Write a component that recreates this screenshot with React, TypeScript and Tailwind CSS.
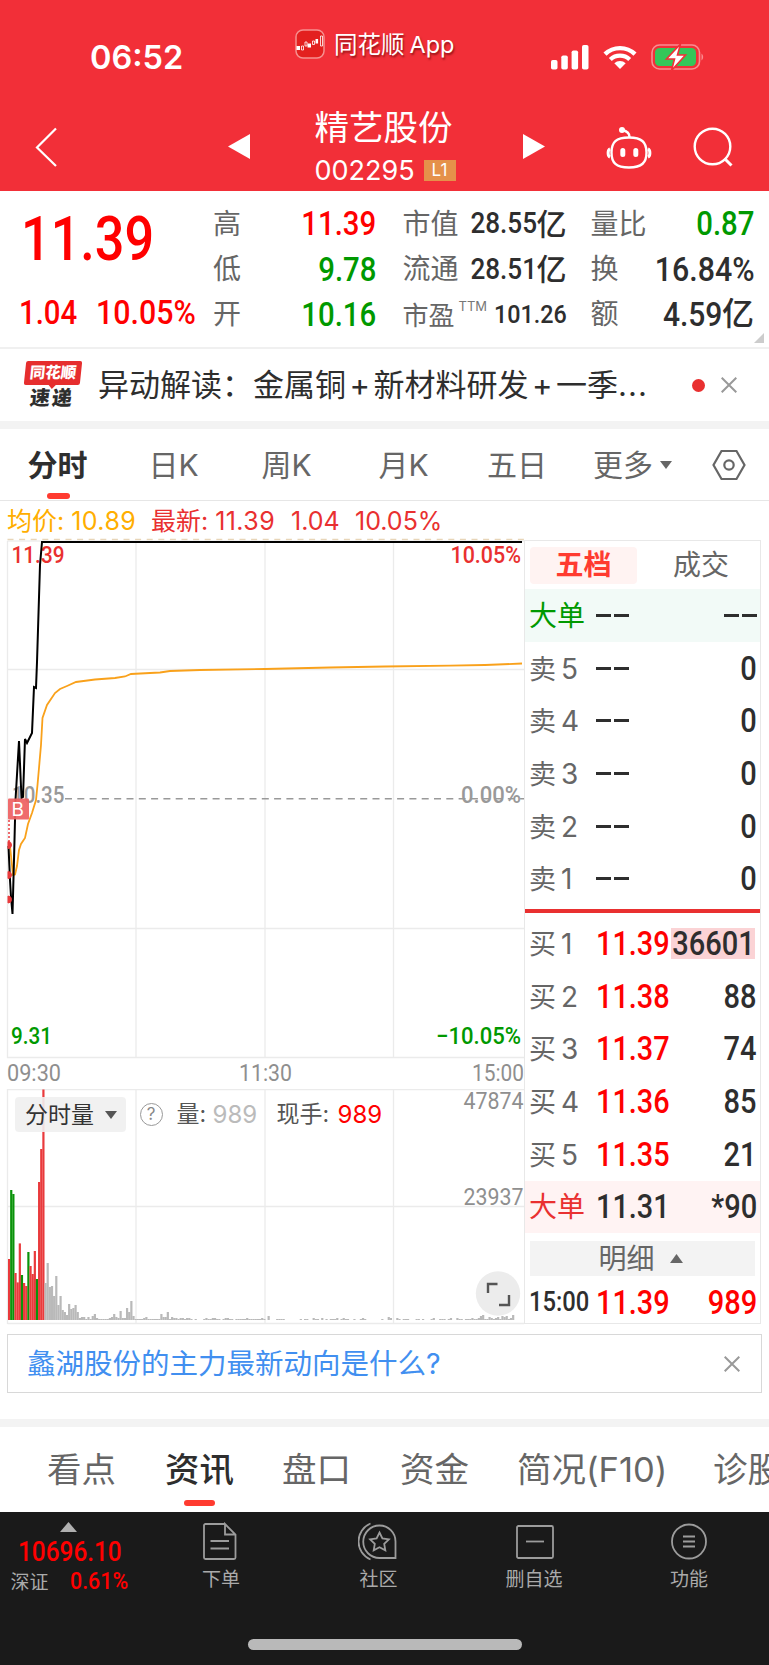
import type { ReactNode } from "react";

const CJK = "[font-family:Inter,'Noto_Sans_CJK_SC',sans-serif]";
const NUM = "[font-family:Roboto,'Noto_Sans_CJK_SC',sans-serif] font-medium whitespace-nowrap";

function StatusBar() {
  return (
    <div className="flex h-[102px] shrink-0 items-start text-white">
      <div className="ml-[90px] mt-[38px] w-[205px] text-[32.500px] font-semibold leading-[40px]">06:52</div>
      <svg className="mt-[29px] h-[30px] w-[30px]" viewBox="0 0 30 30" fill="none">
        <rect x="1" y="1" width="28" height="28" rx="7" fill="#e3201f" stroke="#f6908f" strokeWidth="1.500" />
        <path d="M1.500 17h3.500v4h-3.500zM12.500 14.500h3.500v4h-3.500zM20.500 10h2.600v4.500h-2.600z" fill="#fff" />
        <path d="M6.500 17h2v4h-2zM10 13h2v4h-2zM17.500 12h2v3.500h-2zM25.500 7h2v10h-2z" stroke="#fff" strokeWidth=".8" />
      </svg>
      <div className="ml-[9px] mt-[28px] w-[217px] whitespace-nowrap text-[23.500px] leading-[34px] [text-shadow:1px_2px_2px_rgba(90,0,0,.6)]">
        同花顺<span className="ml-[5px]">App</span>
      </div>
      <svg className="mt-[45px] h-[25px] w-[38px]" viewBox="0 0 38 25" fill="#fff">
        <rect x="0" y="15" width="6.500" height="9.500" rx="1.800" />
        <rect x="10.300" y="10.500" width="6.500" height="14" rx="1.800" />
        <rect x="20.600" y="5.500" width="6.500" height="19" rx="1.800" />
        <rect x="31" y="0" width="6.500" height="24.500" rx="1.800" />
      </svg>
      <svg className="ml-[14px] mt-[45px] h-[24px] w-[34px]" viewBox="0 0 34 24" fill="none" stroke="#fff">
        <path d="M2 9.200A21.500 21.500 0 0 1 32 9.200" strokeWidth="4.400" />
        <path d="M7.300 14.600A14 14 0 0 1 26.700 14.600" strokeWidth="4.200" />
        <path d="M17 24L11.300 18.200A8.300 8.300 0 0 1 22.700 18.200Z" fill="#fff" stroke="none" />
      </svg>
      <svg className="ml-[14px] mt-[43px] h-[28px] w-[54px]" viewBox="0 0 54 28">
        <rect x="1" y="2" width="47.500" height="24" rx="7.500" fill="none" stroke="#f98d91" strokeWidth="1.600" />
        <path d="M50.500 10.500a4.500 4.500 0 0 1 0 7z" fill="#f98d91" />
        <rect x="4" y="5" width="41" height="18" rx="4.500" fill="#34c759" />
        <path d="M29.500 1L15.500 16H23.500L20.500 27.500L34.500 12H26.500Z" fill="#fff" stroke="#f22f38" strokeWidth="1.600" />
      </svg>
    </div>
  );
}

function TitleBar() {
  return (
    <div className="flex h-[89px] shrink-0 items-start text-white">
      <svg className="ml-[34px] mt-[25px] h-[40px] w-[24px]" viewBox="0 0 24 40" fill="none" stroke="#fff" strokeWidth="2.200">
        <path d="M22 1.500L3 20.500L22 39" />
      </svg>
      <svg className="ml-[170px] mt-[32px] h-[25px] w-[22px]" viewBox="0 0 22 25" fill="#fff"><path d="M0 12.500L22 0V25Z" /></svg>
      <div className="ml-[64.500px] w-[208.500px]">
        <div className="mt-[3px] text-[34.500px] leading-[46px]">精艺股份</div>
        <div className="flex h-[40px] items-start">
          <span className="w-[109px] text-[27px] leading-[40px]">002295</span>
          <span className="mt-[9px] flex h-[21px] w-[32px] items-center justify-center bg-[#e5914a] text-[17px] leading-none">L1</span>
        </div>
      </div>
      <svg className="mt-[32px] h-[25px] w-[22px]" viewBox="0 0 22 25" fill="#fff"><path d="M22 12.500L0 0V25Z" /></svg>
      <svg className="ml-[60px] mt-[23px] h-[44px] w-[48px]" viewBox="0 0 48 44" fill="none" stroke="#fff" strokeWidth="2.400">
        <path d="M24 12.500c13 0 17.500 5 17.500 15S37 42.500 24 42.500S6.500 38 6.500 27.500S11 12.500 24 12.500Z" />
        <path d="M5 24c-2.500 1-2.500 7 0 8M43 24c2.500 1 2.500 7 0 8" strokeWidth="3" />
        <path d="M24.500 12c0-4-3-6-7-7" />
        <circle cx="17" cy="5" r="3" fill="#fff" stroke="none" />
        <path d="M17.800 25.500v4M30.800 25.500v4" strokeWidth="5" strokeLinecap="round" />
      </svg>
      <svg className="ml-[39px] mt-[24px] h-[42px] w-[42px]" viewBox="0 0 42 42" fill="none" stroke="#fff" strokeWidth="2.400">
        <circle cx="20.500" cy="20.500" r="17.800" />
        <path d="M32.500 32.500L39.500 39.500" strokeWidth="3" />
      </svg>
    </div>
  );
}

function Stat({ label, children }: { label: ReactNode; children: ReactNode }) {
  return (
    <div className="flex h-[45.400px] items-center justify-between leading-none">
      <span className="whitespace-nowrap text-[28px] text-[#666]">{label}</span>
      {children}
    </div>
  );
}

function Yi({ value, className, unit }: { value: string; className: string; unit: string }) {
  return (
    <span className="flex items-center text-[#2e2e2e]">
      <span className={className}>{value}</span>
      <span className={unit + " font-medium"}>亿</span>
    </span>
  );
}

function Quote() {
  const big = NUM + " inline-block origin-right scale-x-[.89] text-[33px]";
  const mid = NUM + " inline-block origin-right scale-x-[.9] text-[29px]";
  return (
    <div className="relative flex h-[158px] shrink-0 border-b-2 border-[#f0f0f0] pt-[10px]">
      <div className="w-[213px] text-[#f00]">
        <div className={NUM + " ml-[20.500px] h-[89px] origin-left scale-x-[.855] text-[61px] leading-[76px]"}>11.39</div>
        <div className={NUM + " ml-[19px] flex h-[45px] items-center text-[33px] leading-none"}>
          <span className="w-[77px] origin-left scale-x-[.89]">1.04</span>
          <span className="origin-left scale-x-[.92]">10.05%</span>
        </div>
      </div>
      <div className="w-[163.500px]">
        <Stat label="高"><span className={big + " text-[#f00]"}>11.39</span></Stat>
        <Stat label="低"><span className={big + " text-[#009900]"}>9.78</span></Stat>
        <Stat label="开"><span className={big + " text-[#009900]"}>10.16</span></Stat>
      </div>
      <div className="ml-[26px] w-[164px]">
        <Stat label="市值"><Yi value="28.55" className={mid} unit="text-[30px]" /></Stat>
        <Stat label="流通"><Yi value="28.51" className={mid} unit="text-[30px]" /></Stat>
        <Stat label={<span className="flex w-[70px] pt-[3px] text-[26px]">市盈<span className="-mt-[3px] ml-[4px] text-[13px] text-[#777]">TTM</span></span>}>
          <span className={NUM + " inline-block origin-right scale-x-[.88] text-[26.500px] text-[#2e2e2e]"}>101.26</span>
        </Stat>
      </div>
      <div className="ml-[24px] w-[163.500px]">
        <Stat label="量比"><span className={big + " text-[#009900]"}>0.87</span></Stat>
        <Stat label="换"><span className={NUM + " inline-block origin-right scale-x-[.92] text-[33px] text-[#2e2e2e]"}>16.84%</span></Stat>
        <Stat label="额"><Yi value="4.59" className={NUM + " inline-block origin-right scale-x-[.91] text-[33px]"} unit="text-[32px]" /></Stat>
      </div>
      <svg className="absolute right-[5px] bottom-[4px] h-[10px] w-[10px]" viewBox="0 0 10 10" fill="#ccc"><path d="M10 0V10H0Z" /></svg>
    </div>
  );
}

function Cross() {
  return (
    <svg className="h-[16px] w-[16px]" viewBox="0 0 16 16" stroke="#999" strokeWidth="2"><path d="M.7 .7L15.300 15.300M15.300 .7L.7 15.300" /></svg>
  );
}

function News() {
  return (
    <div className="flex h-[80px] shrink-0 items-center border-b-8 border-[#f3f3f3]">
      <div className="-mt-[2px] ml-[25px] flex w-[73px] flex-col">
        <div className="relative flex h-[24px] w-[56px] -skew-x-6 items-center justify-center rounded-[2px] bg-[#e62e2e] text-[15.500px] font-black leading-none text-white">
          同花顺
          <svg className="absolute top-[23px] left-[24px] h-[5px] w-[9px]" viewBox="0 0 9 5" fill="#e62e2e"><path d="M0 0H9L4.500 5Z" /></svg>
        </div>
        <div className="mt-[3px] ml-[5px] h-[20px] -skew-x-6 text-[20px] font-black leading-[20px] tracking-[2px] text-[#2e2e2e]">速递</div>
      </div>
      <div className="-mt-[2px] w-[594px] whitespace-nowrap text-[31px] leading-none text-[#2e2e2e]">
        异动解读：金属铜<span className="mx-[3.500px]">+</span>新材料研发<span className="mx-[3.500px]">+</span>一季<span className="tracking-[1px]">...</span>
      </div>
      <div className="h-[13px] w-[13px] rounded-full bg-[#e93030]" />
      <div className="ml-[16px]"><Cross /></div>
    </div>
  );
}

function ChartTabs() {
  return (
    <div className="flex h-[72px] shrink-0 items-center border-b border-[#e6e6e6] text-[30px] leading-none text-[#666]">
      <div className="relative ml-[27.500px] w-[121px] font-bold text-[#2e2e2e]">
        分时
        <div className="absolute top-[43px] left-[19px] h-[6px] w-[23px] rounded-full bg-[#ff3b30]" />
      </div>
      <div className="w-[113px]">日K</div>
      <div className="w-[117px]">周K</div>
      <div className="w-[108.500px]">月K</div>
      <div className="w-[106px]">五日</div>
      <div className="w-[67px]">更多</div>
      <svg className="h-[8px] w-[12px]" viewBox="0 0 12 8" fill="#666"><path d="M0 0H12L6 8Z" /></svg>
      <svg className="ml-[40px] h-[32px] w-[34px]" viewBox="0 0 34 32" fill="none" stroke="#666" strokeWidth="2.200">
        <path d="M9.500 2H24.500L32.500 16L24.500 30H9.500L1.500 16Z" />
        <circle cx="17" cy="16" r="4.700" />
      </svg>
    </div>
  );
}

const RED = "#e93a3c";
const GREEN = "#0a930a";
const GREY = "#b9b9b9";
const VOLUME = [
  61, 130, 126, 47, 37.6, 76.6, 45, 37, 34, 68, 54, 46, 69, 41, 138, 171, 230.5, 37, 57, 33, 34, 24, 44, 15, 24, 10, 8, 5, 16, 11,
  12, 15, 8, 2, 3, 3, 1, 3, 1, 4, 6, 2, 1, 1, 1, 1, 1, 2, 3, 6, 3, 2, 9, 2, 2, 12, 8, 19, 4, 1, 1, 1, 1, 2, 3, 1, 1, 1, 1, 1, 1,
  6, 3, 3, 8, 1, 3, 2, 2, 1, 2, 2, 1, 2, 2, 1, 0, 1, 0, 0, 0, 1, 2, 1, 1, 2, 2, 1, 1, 0, 1, 2, 2, 1, 1, 0, 1, 1, 1, 1, 1, 2, 1, 1, 1,
  1, 1, 1, 2, 1, 0, 4, 0, 0, 0, 1, 1, 1, 1, 0, 0, 0, 0, 0, 0, 0, 1, 0, 1, 1, 0, 0, 2, 1, 1, 0, 2, 0, 1, 0, 1, 1, 1, 2, 0, 1, 2, 1, 1,
  0, 0, 1, 0, 0, 1, 2, 1, 0, 0, 0, 0, 0, 0, 0, 1, 0, 0, 3, 2, 0, 0, 2, 1, 0, 1, 1, 1, 0, 0, 0, 1, 1, 0, 1, 0, 0, 0, 1, 2, 0, 0, 1, 1,
  1, 0, 1, 2, 0, 0, 2, 1, 1, 0, 1, 1, 1, 2, 1, 1, 2, 4, 5, 1, 1, 3, 2, 1, 2, 3, 1, 4, 3, 4, 1, 2, 5,
];
const FALLING = [1, 2, 6, 9, 13];

type LabelProps = { x: number; y: number; width: number; fill: string; children: string };

function AxisLabel({ x, y, width, fill, children }: LabelProps) {
  return <text x={x} y={y} textLength={width} lengthAdjust="spacingAndGlyphs" fill={fill}>{children}</text>;
}

function PriceChart() {
  return (
    <svg className="block h-[548px] w-[525px]" viewBox="0 541 525 548" fill="none" overflow="visible">
      <path d="M136 541V1057M265 541V1057M393.500 541V1057M7.500 669.500H524M7.500 928.500H524M7.500 541V1057.500H524" stroke="#ebebeb" strokeWidth="1.300" />
      <path d="M7.500 539.500H524" stroke="#e8d5b8" strokeWidth="1.500" strokeDasharray="6 5.600" />
      <path d="M7.500 541H524" stroke="#e6e6e6" />
      <path d="M65 798.800H524" stroke="#999" strokeWidth="1.500" strokeDasharray="7 5.300" />
      <g fontFamily="Roboto, sans-serif" fontWeight="500" fontSize="23.500">
        <AxisLabel x={11.500} y={563} width={53} fill="#e93030">11.39</AxisLabel>
        <AxisLabel x={450.500} y={563} width={70.500} fill="#e93030">10.05%</AxisLabel>
        <AxisLabel x={12} y={803} width={52.500} fill="#999">10.35</AxisLabel>
        <AxisLabel x={461} y={803} width={60} fill="#999">0.00%</AxisLabel>
        <AxisLabel x={11} y={1043.500} width={41} fill="#009900">9.31</AxisLabel>
        <AxisLabel x={436} y={1043.500} width={85} fill="#009900">−10.05%</AxisLabel>
        <g fontSize="24" fontWeight="400">
          <AxisLabel x={7} y={1080.500} width={54} fill="#8f8f8f">09:30</AxisLabel>
          <AxisLabel x={239} y={1080.500} width={53} fill="#8f8f8f">11:30</AxisLabel>
          <AxisLabel x={472} y={1080.500} width={52} fill="#8f8f8f">15:00</AxisLabel>
        </g>
      </g>
      <path d="M10 846L13 875L15 874.500L17 866L19 850L21 844L25 838L28 824L32 813L36 800L37.500 785L39 768L41 745L42.500 718L47 705L55 693L60 689L67 686L76 682L95 679.500L115 678L125 676.500L131 674L150 673L160 672.500L170 671L200 670L265 669L330 667.500L385 666.500L450 665.700L485 665L522 663.500" stroke="#f9a11b" strokeWidth="1.800" />
      <path d="M8.500 846L10 880L11 897L12.500 914L14 860L15.500 800L19 741L21.500 798L23 797L25 739L27 743L29 739L32 733L34 687L36 688L37 662L40 565L42 542H522" stroke="#000" strokeWidth="2" />
      <path d="M9 820V842" stroke="#e93a3c" strokeWidth="1.500" strokeDasharray="2 2" />
      <path d="M8 841.500a3.500 3.500 0 0 1 0 7zM8 871.500a3.500 3.500 0 0 1 0 7zM8 896a3.500 3.500 0 0 1 0 7z" fill="#e93a3c" stroke="#e93a3c" />
      <rect x="8" y="798.500" width="21" height="21" rx="1" fill="#ee5f61" fillOpacity=".92" />
      <text x="11.500" y="816" fontFamily="Inter, sans-serif" fontSize="19" fill="#fff">B</text>
    </svg>
  );
}

function VolumeChart() {
  return (
    <div className="relative h-[236px] w-[525px]">
      <svg className="block h-[236px] w-[525px]" viewBox="0 1089 525 236" fill="none">
        <path d="M7.500 1089.500H524M7.500 1206.500H524M7.500 1323.500H524M7.500 1089V1324M136 1089V1324M265 1089V1324M393.500 1089V1324" stroke="#ebebeb" strokeWidth="1.300" />
        {VOLUME.map((v, i) => (
          <rect key={i} x={8 + i * 2.145} y={1320 - v} width="2.200" height={v} fill={i > 16 ? GREY : FALLING.includes(i) ? GREEN : RED} />
        ))}
        <g fontFamily="Roboto, sans-serif" fontSize="24">
          <AxisLabel x={463.500} y={1109} width={60} fill="#8f8f8f">47874</AxisLabel>
          <AxisLabel x={463.500} y={1205} width={60} fill="#8f8f8f">23937</AxisLabel>
        </g>
        <circle cx="498" cy="1293.500" r="22.200" fill="#ececec" />
        <path d="M488 1293V1284H497.500M499 1305H509V1295" stroke="#555" strokeWidth="2.400" />
      </svg>
      <div className="absolute top-[8px] left-[15px] flex h-[35px] items-center whitespace-nowrap text-[23px] leading-none text-[#555]">
        <div className="flex h-[35px] w-[111px] items-center justify-between rounded-[4px] bg-[#f0f0f0]/90 pr-[9px] pl-[10px] text-[#333]">
          <span className="pt-px">分时量</span>
          <svg className="h-[8px] w-[12px]" viewBox="0 0 12 8" fill="#555"><path d="M0 0H12L6 8Z" /></svg>
        </div>
        <div className="ml-[13.500px] flex h-[23px] w-[23px] items-center justify-center rounded-full border-[1.500px] border-[#999] text-[17px] text-[#888]">?</div>
        <div className="ml-[14px] w-[36px]">量:</div>
        <div className="w-[64px] text-[24px] text-[#bbb]">989</div>
        <div className="w-[61px]">现手:</div>
        <div className="text-[24px] text-[#f00]">989</div>
      </div>
    </div>
  );
}

function Dashes() {
  return (
    <span className="flex gap-[3px]">
      <span className="h-[3px] w-[15px] bg-[#2e2e2e]" />
      <span className="h-[3px] w-[15px] bg-[#2e2e2e]" />
    </span>
  );
}

type OrderProps = { label: string; level?: string; price?: string; amount?: string; tone?: string; labelTone?: string; bg?: string; marked?: boolean };

function Order({ label, level, price, amount, tone = "text-[#2e2e2e]", labelTone = "text-[#666]", bg = "", marked }: OrderProps) {
  return (
    <div className={"flex h-[52.700px] shrink-0 items-center pr-[3px] pl-[4px] leading-none " + bg}>
      <span className={"w-[66.500px] shrink-0 whitespace-nowrap pt-[1px] text-[28px] " + labelTone}>
        <span className={level ? "text-[27px]" : ""}>{label}</span>
        {level && <span className="ml-[5px]">{level}</span>}
      </span>
      <span className="w-[73px] shrink-0">
        {price ? <span className={NUM + " block origin-left scale-x-[.875] text-[33px] " + tone}>{price}</span> : <Dashes />}
      </span>
      <span className={"ml-auto flex h-[31px] items-center justify-end " + (marked ? "mr-[2px] w-[84px] bg-[#fbd3d5]" : "")}>
        {amount ? <span className={NUM + " block shrink-0 origin-right scale-x-[.88] text-[33px] text-[#2e2e2e]"}>{amount}</span> : <Dashes />}
      </span>
    </div>
  );
}

function OrderBook() {
  const red = "text-[#f00]";
  return (
    <div className="flex h-[784px] w-[237px] flex-col border border-[#e8e8e8]">
      <div className="flex h-[48px] shrink-0 items-center pl-[5px] text-[28px] leading-none text-[#666]">
        <div className="flex h-[37px] w-[107px] items-center justify-center rounded-[4px] bg-[#fff3f2] font-bold text-[#ff3b30]">五档</div>
        <div className="ml-[36px]">成交</div>
      </div>
      <Order label="大单" labelTone="text-[#009900]" bg="bg-[#f2faf7]" />
      {["5", "4", "3", "2", "1"].map((n) => <Order key={n} label="卖" level={n} amount="0" />)}
      <div className="mt-[3.500px] mb-[4.500px] h-[4px] shrink-0 bg-[#e93030]" />
      <Order label="买" level="1" price="11.39" tone={red} amount="36601" marked />
      <Order label="买" level="2" price="11.38" tone={red} amount="88" />
      <Order label="买" level="3" price="11.37" tone={red} amount="74" />
      <Order label="买" level="4" price="11.36" tone={red} amount="85" />
      <Order label="买" level="5" price="11.35" tone={red} amount="21" />
      <Order label="大单" price="11.31" amount="*90" labelTone="text-[#e93030]" bg="bg-[#fff3f3]" />
      <div className="mx-[5px] mt-[8px] flex h-[35px] shrink-0 items-center justify-center gap-[15px] bg-[#f3f3f3] pr-[4px] text-[28px] leading-none text-[#666]">
        明细
        <svg className="h-[9px] w-[13px]" viewBox="0 0 13 9" fill="#666"><path d="M6.500 0L13 9H0Z" /></svg>
      </div>
      <div className={NUM + " flex h-[53px] shrink-0 items-center pr-[3px] pl-[4px] text-[33px] leading-none text-[#f00]"}>
        <span className="w-[66.500px] origin-left scale-x-[.88] text-[27px] text-[#2e2e2e]">15:00</span>
        <span className="origin-left scale-x-[.875]">11.39</span>
        <span className="ml-auto origin-right scale-x-[.88]">989</span>
      </div>
    </div>
  );
}

function BottomItem({ label, className, children }: { label: string; className: string; children: ReactNode }) {
  return (
    <div className={"flex flex-col items-center pt-[9px] " + className}>
      <svg className="h-[40px] w-[42px]" viewBox="0 0 42 40" fill="none" stroke="#9c9c9c" strokeWidth="1.800">{children}</svg>
      <span className="mt-[7.500px] whitespace-nowrap text-[19px] leading-[22px]">{label}</span>
    </div>
  );
}

export default function App() {
  return (
    <div className={CJK + " flex h-[1665px] w-[769px] flex-col overflow-hidden bg-white"}>
      <div className="h-[191px] shrink-0 bg-[#f22f38]">
        <StatusBar />
        <TitleBar />
      </div>
      <Quote />
      <News />
      <ChartTabs />
      <div className="flex h-[39px] shrink-0 items-center whitespace-nowrap pt-px text-[25px] leading-none text-[#e93030]">
        <span className="ml-[7px] w-[144px] text-[#ffae00]">均价: <span className="tracking-[.4px]">10.89</span></span>
        <span className="w-[140px]">最新: <span className="tracking-[.4px]">11.39</span></span>
        <span className="w-[64px]">1.04</span>
        <span>10.05%</span>
      </div>
      <div className="flex h-[794px] shrink-0">
        <div className="mt-px w-[524px]">
          <PriceChart />
          <VolumeChart />
        </div>
        <OrderBook />
      </div>
      <div className="mx-[7px] flex h-[59px] shrink-0 items-center justify-between border border-[#d8d8d8] pr-[21px] pl-[19px] text-[28.500px] leading-none text-[#418ff0]">
        <span className="whitespace-nowrap pt-[2px]">蠡湖股份的主力最新动向是什么?</span>
        <Cross />
      </div>
      <div className="mt-[26px] h-[8px] shrink-0 bg-[#f3f3f3]" />
      <div className="flex h-[85px] shrink-0 items-center overflow-hidden whitespace-nowrap pl-[47px] pt-[2px] text-[34.500px] leading-none text-[#666]">
        <div className="w-[118px] shrink-0">看点</div>
        <div className="relative w-[117px] shrink-0 font-medium text-[#2e2e2e]">
          资讯
          <div className="absolute top-[47px] left-[19px] h-[6px] w-[31px] rounded-full bg-[#ff3b30]" />
        </div>
        <div className="w-[118px] shrink-0">盘口</div>
        <div className="w-[117px] shrink-0">资金</div>
        <div className="w-[196px] shrink-0">简况(F10)</div>
        <div className="shrink-0">诊股</div>
      </div>
      <div className="flex grow flex-col bg-[#1a1a1a] text-[#aaa]">
        <div className="flex h-[127px] shrink-0">
          <div className="w-[138px] pt-[10px]">
            <svg className="ml-[60px] h-[10px] w-[17px]" viewBox="0 0 17 10" fill="#b0b0b0"><path d="M8.500 0L17 10H0Z" /></svg>
            <div className={NUM + " mt-[3px] ml-[18px] h-[32px] origin-left scale-x-[.87] text-[28px] leading-[34px] text-[#f00]"}>10696.10</div>
            <div className="flex items-center text-[19px] leading-[28px]">
              <span className="ml-[10.500px] w-[59px] pt-[2px]">深证</span>
              <span className={NUM + " origin-left scale-x-[.93] text-[23px] text-[#f00]"}>0.61%</span>
            </div>
          </div>
          <BottomItem label="下单" className="w-[166px]">
            <path d="M25 3H5.500a1.500 1.500 0 0 0-1.500 1.500V36.500A1.500 1.500 0 0 0 5.500 38H34A1.500 1.500 0 0 0 35.500 36.500V13.500L25 3V13.500H35.500M10.500 20H29M10.500 27.500H29" />
          </BottomItem>
          <BottomItem label="社区" className="w-[149px]">
            <path d="M21.500 4.500a16 16 0 0 0 0 32.500H37.500V20.500A16 16 0 0 0 21.500 4.500ZM12.500 2.500a19.500 19.500 0 0 0 0 36" />
            <path d="M21.500 11.500l2.900 5.900 6.500 .9-4.700 4.600 1.100 6.500-5.800-3.100-5.800 3.100 1.100-6.500-4.700-4.600 6.500-.9z" />
          </BottomItem>
          <BottomItem label="删自选" className="w-[162px]">
            <rect x="4" y="5" width="36" height="32" rx="1.500" />
            <path d="M13 20.500H31" />
          </BottomItem>
          <BottomItem label="功能" className="w-[148px]">
            <circle cx="21" cy="20.500" r="17" />
            <path d="M15 15.500H27M15 20.500H27M15 25.500H27" />
          </BottomItem>
        </div>
        <div className="mx-auto h-[11px] w-[274px] rounded-full bg-[#b9b9b9]" />
      </div>
    </div>
  );
}
